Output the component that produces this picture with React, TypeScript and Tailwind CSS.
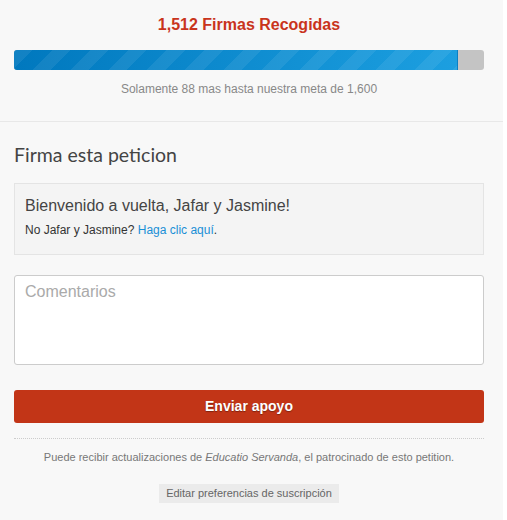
const signatures = 1512;
const goal = 1600;

export default function App() {
  const pct = (signatures / goal) * 100;

  return (
    <div className="w-[507px] h-[520px] bg-white font-['Liberation_Sans',Arial,sans-serif]">
      <div className="w-[503px] h-full bg-[#f8f8f8]">
        {/* Progress */}
        <div className="pl-[14px] pr-[19px] pt-[15px] pb-[24px] border-b border-[#e8e8e8]">
          <h2 className="text-center text-[16px] font-bold text-[#c9341c] leading-[20px]">
            1,512 Firmas Recogidas
          </h2>
          <div className="mt-[15px] h-[20px] rounded-[3px] bg-[#c4c4c4] overflow-hidden flex">
            <div
              className="h-full bg-[repeating-linear-gradient(135deg,rgba(255,255,255,0.07)_0_13px,transparent_13px_27px),linear-gradient(to_right,#0078be,#1c9fe0)] border-r border-[#0a7fc4]"
              style={{ width: `${pct}%` }}
            />
          </div>
          <p className="mt-[11px] text-center text-[12px] text-[#888] leading-[16px]">
            Solamente 88 mas hasta nuestra meta de 1,600
          </p>
        </div>

        {/* Sign form */}
        <div className="pl-[14px] pr-[19px] pt-[21px]">
          <h3 className="font-['Lato',sans-serif] text-[19.5px] text-[#444] leading-[24px]">
            Firma esta peticion
          </h3>

          <div className="mt-[16px] h-[72px] bg-[#f4f4f4] border border-[#e4e4e4] px-[10px] pt-[12px]">
            <p className="text-[16px] text-[#444] leading-[20px]">
              Bienvenido a vuelta, Jafar y Jasmine!
            </p>
            <p className="mt-[6px] text-[12px] text-[#333] leading-[16px]">
              No Jafar y Jasmine? <a href="#" className="text-[#1a8fd6]">Haga clic aquí</a>.
            </p>
          </div>

          <textarea
            placeholder="Comentarios"
            className="mt-[20px] block w-full h-[90px] bg-white border border-[#ccc] rounded-[3px] px-[10px] py-[6px] text-[16px] leading-[20px] text-[#444] placeholder:text-[#aaa] resize-none outline-none"
          />

          <button className="mt-[25px] block w-full h-[33px] rounded-[3px] bg-[#c23517] text-white text-[14px] font-bold [text-shadow:0_1px_1px_rgba(0,0,0,0.35)]">
            Enviar apoyo
          </button>

          <div className="mt-[15px] border-t border-dotted border-[#ccc]" />

          <p className="mt-[11px] text-center text-[11px] text-[#777] leading-[14px]">
            Puede recibir actualizaciones de <em>Educatio Servanda</em>, el patrocinado de esto petition.
          </p>

          <div className="mt-[20px] flex justify-center">
            <button className="h-[19px] px-[7px] bg-[#ebebeb] text-[11px] text-[#666] leading-[19px]">
              Editar preferencias de suscripción
            </button>
          </div>
        </div>
      </div>
    </div>
  );
}
